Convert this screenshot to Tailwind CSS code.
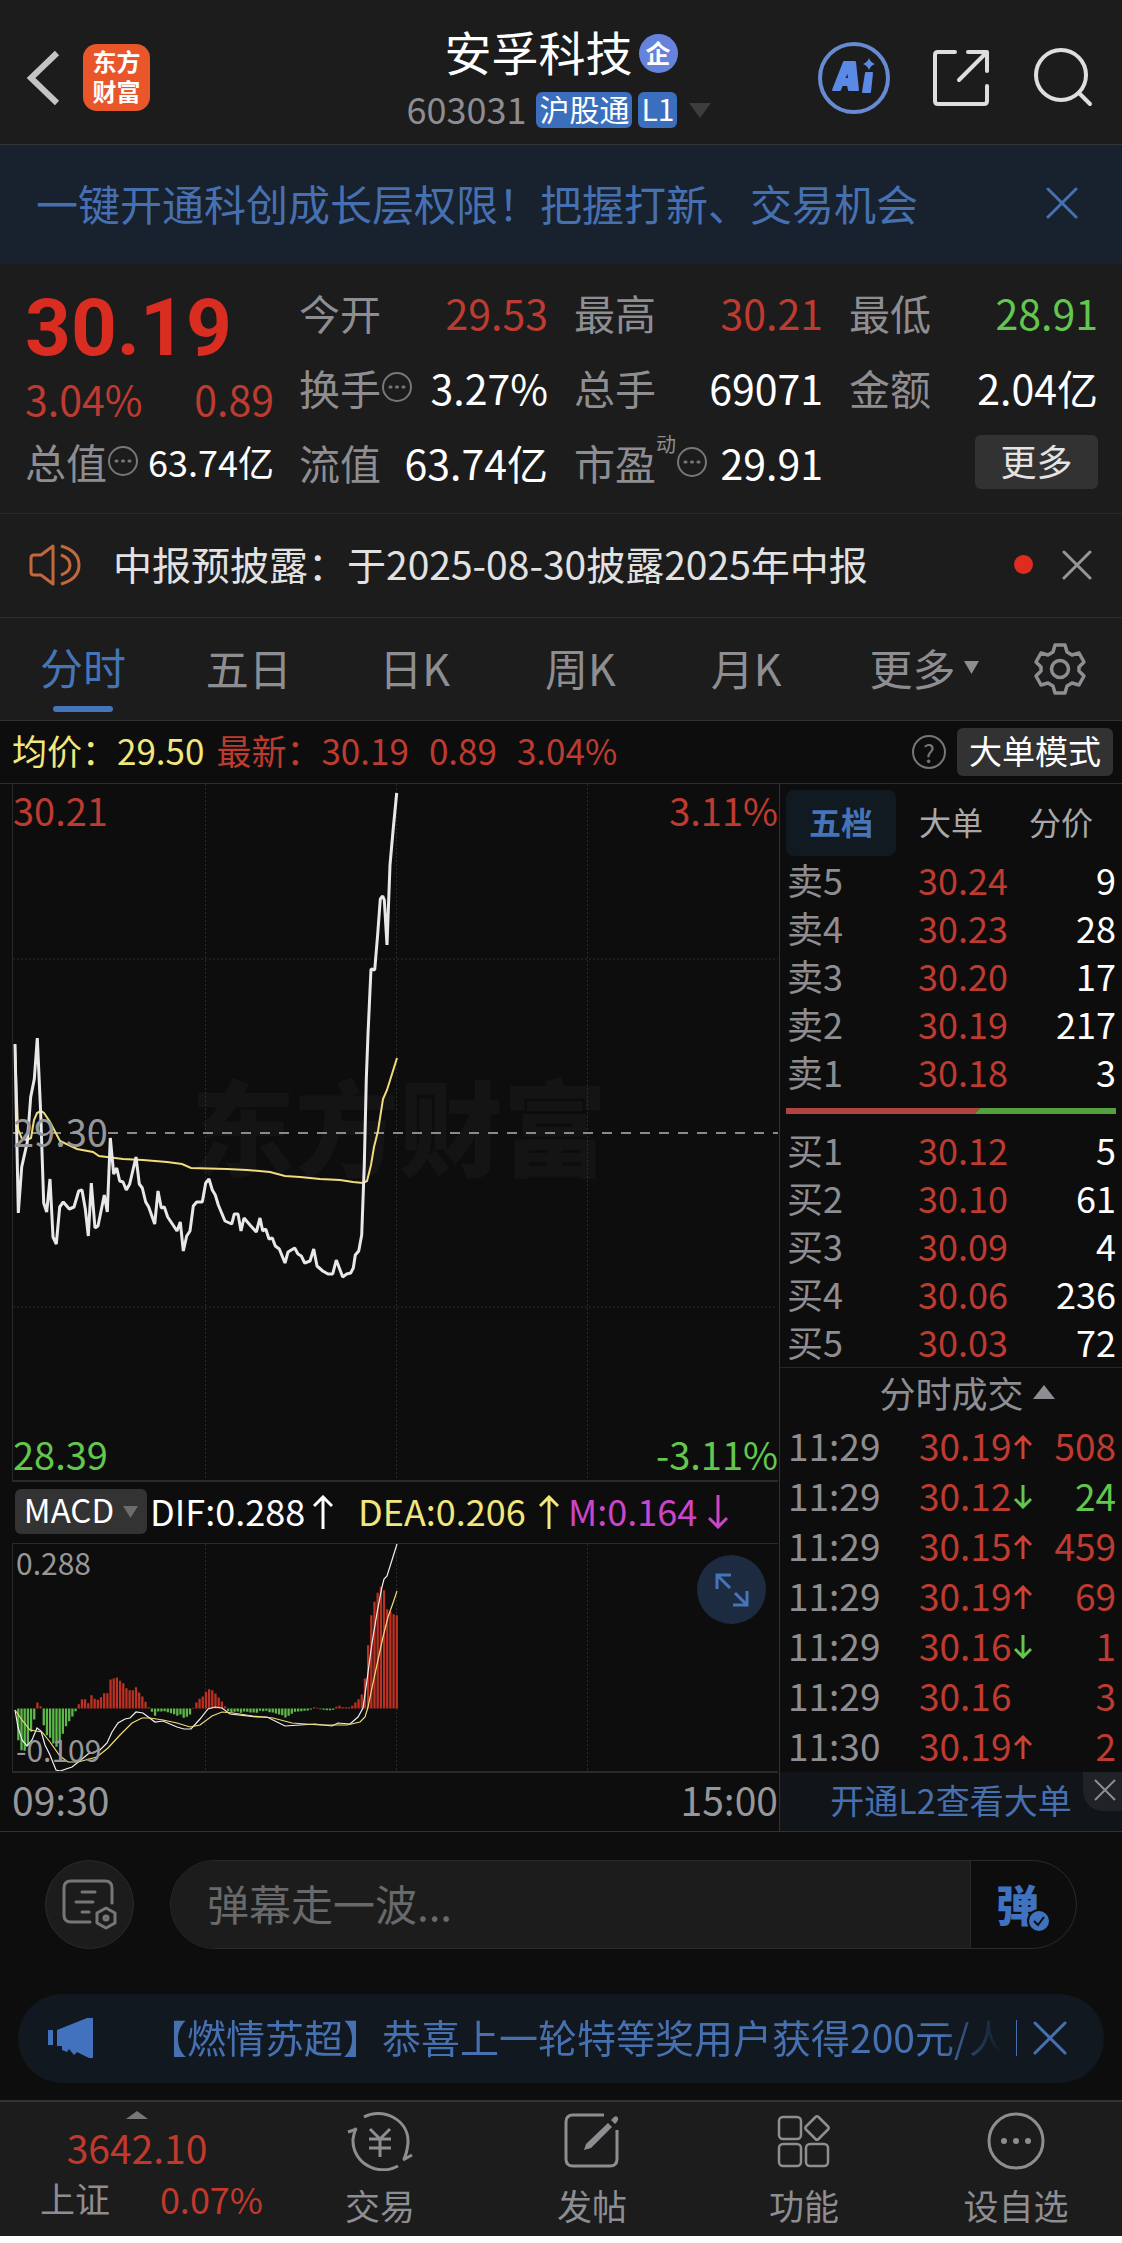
<!DOCTYPE html>
<html lang="zh-CN">
  <head>
    <meta charset="UTF-8" />
    <meta name="viewport" content="width=device-width, initial-scale=1.0" />
    <title>安孚科技 603031</title>
    <script src="https://cdn.jsdelivr.net/npm/@tailwindcss/browser@4"></script>
  </head>
  <body class="bg-[#fcfcfc] font-['Noto_Sans_CJK_SC',sans-serif] text-[#8e8e92]">
    <!-- Header -->
    <header class="bg-[#1c1c1c] h-[145px] border-b border-[#323436] grid grid-cols-[1fr_auto_1fr] pb-[1px]">
      <div class="flex items-center gap-[23px] pl-[26px] pt-3">
        <button aria-label="返回" class="w-[34px] h-[56px]">
          <svg viewBox="0 0 34 56" class="w-full h-full" fill="none" stroke="#c4c4c4" stroke-width="6"><path d="M31 3 L5 28 L31 53" /></svg>
        </button>
        <a href="#home" class="w-[67px] h-[67px] rounded-[14px] bg-[#e8562a] text-white font-bold text-[24px] leading-[30px] text-center flex flex-col justify-center pb-1"><span>东方</span><span>财富</span></a>
      </div>
      <div class="flex flex-col items-center pt-[22px]">
        <div class="flex items-center gap-[6px] h-[62px]">
          <h1 class="text-white text-[47px] leading-[62px] pb-1">安孚科技</h1>
          <span class="w-[39px] h-[39px] rounded-full bg-[#6583dc] text-white font-bold text-[25px] leading-[36px] text-center">企</span>
        </div>
        <div class="flex items-center h-[52px] pr-1">
          <span class="text-[36px] leading-[52px] mr-[10px] pb-1">603031</span>
          <span class="bg-[#3b6fbe] text-white text-[30px] leading-[33px] h-[36px] rounded-[6px] px-[3px] mr-[6px]">沪股通</span>
          <span class="bg-[#3b6fbe] text-white text-[30px] leading-[33px] h-[36px] rounded-[6px] px-[3px]">L1</span>
          <svg viewBox="0 0 22 15" class="w-[22px] h-[15px] ml-[12px]" fill="#3c3c3c"><path d="M0 0 H22 L11 15 Z" /></svg>
        </div>
      </div>
      <div class="flex items-center justify-end gap-[42px] pr-[28px] pt-3">
        <button aria-label="AI" class="w-[72px] h-[72px]">
          <svg viewBox="0 0 72 72" class="w-full h-full" fill="#5b8ae6">
            <circle cx="36" cy="36" r="34" fill="none" stroke="#678bd2" stroke-width="4" />
            <path fill-rule="evenodd" stroke="#5b8ae6" stroke-width="2" stroke-linejoin="round" d="M26 20 H37 L40 48 H31 L30 43 H24 L22 48 H15 Z M30 28 L26 37 H31 Z" />
            <path stroke="#5b8ae6" stroke-width="2" stroke-linejoin="round" d="M48 31 H54 L52 50 H45 Z" />
            <path d="M51 16 Q52.500 20.500 57 22 Q52.500 23.500 51 28 Q49.500 23.500 45 22 Q49.500 20.500 51 16 Z" />
          </svg>
        </button>
        <button aria-label="分享" class="w-[58px] h-[58px]">
          <svg viewBox="0 0 58 58" class="w-full h-full" fill="none" stroke="#dedede" stroke-width="4" stroke-linecap="round" stroke-linejoin="round"><path d="M23 3 H6 Q3 3 3 6 V52 Q3 55 6 55 H52 Q55 55 55 52 V37 M36 3 H55 V22 M54 4 L27 31" /></svg>
        </button>
        <button aria-label="搜索" class="w-[62px] h-[62px]">
          <svg viewBox="0 0 62 62" class="w-full h-full" fill="none" stroke="#dedede" stroke-width="4" stroke-linecap="round"><circle cx="29" cy="28" r="25" /><path d="M47 46 L58 57" /></svg>
        </button>
      </div>
    </header>

    <!-- Promo banner -->
    <section class="bg-[#18212e] h-[119px] flex items-center justify-between pl-[36px] pr-[44px] pb-1 text-[#4670b0]">
      <a href="#promo" class="text-[42px] leading-[60px]">一键开通科创成长层权限！把握打新、交易机会</a>
      <button aria-label="关闭" class="w-[32px] h-[32px]">
        <svg viewBox="0 0 32 32" class="w-full h-full" fill="none" stroke="currentColor" stroke-width="3" stroke-linecap="round"><path d="M2 2 L30 30 M30 2 L2 30" /></svg>
      </button>
    </section>

    <!-- Quote -->
    <section class="bg-[#1c1c1c] h-[250px] border-b border-[#2a2a2a] pt-[12px] pl-[25px] pr-[24px] flex gap-[25px]">
      <div class="w-[249px]">
        <div class="h-[92px] text-[#d82d20] text-[80px] leading-[104px] font-[Roboto] font-bold">30.19</div>
        <div class="h-[60px] flex justify-between text-[#bd3b30] text-[41px] leading-[60px]"><span>3.04%</span><span>0.89</span></div>
        <div class="h-[66px] flex items-center text-[41px] leading-[66px]">
          <span>总值</span>
          <svg viewBox="0 0 32 32" class="w-[32px] h-[32px]" fill="none" stroke="#77777a" stroke-width="2"><circle cx="16" cy="16" r="14" /><path d="M9 16h1 M15.500 16h1 M22 16h1" stroke-width="3" stroke-linecap="round" /></svg>
          <span class="ml-auto text-white text-[36px]">63.74亿</span>
        </div>
      </div>
      <dl class="flex-1 grid grid-cols-3 auto-rows-[75px] gap-x-[26px] h-[225px] pt-[3px] text-[41px] leading-[66px]">
        <div class="flex justify-between"><dt>今开</dt><dd class="text-[#bd3b30]">29.53</dd></div>
        <div class="flex justify-between"><dt>最高</dt><dd class="text-[#bd3b30]">30.21</dd></div>
        <div class="flex justify-between"><dt>最低</dt><dd class="text-[#63c74d]">28.91</dd></div>
        <div class="flex justify-between">
          <dt class="flex items-center h-[66px]">换手
            <svg viewBox="0 0 32 32" class="w-[32px] h-[32px]" fill="none" stroke="#77777a" stroke-width="2"><circle cx="16" cy="16" r="14" /><path d="M9 16h1 M15.500 16h1 M22 16h1" stroke-width="3" stroke-linecap="round" /></svg>
          </dt>
          <dd class="text-white">3.27%</dd>
        </div>
        <div class="flex justify-between"><dt>总手</dt><dd class="text-white">69071</dd></div>
        <div class="flex justify-between"><dt>金额</dt><dd class="text-white">2.04亿</dd></div>
        <div class="flex justify-between"><dt>流值</dt><dd class="text-white">63.74亿</dd></div>
        <div class="flex justify-between">
          <dt class="flex items-center h-[66px]">市盈<span class="text-[20px] leading-[30px] self-start">动</span>
            <svg viewBox="0 0 32 32" class="w-[32px] h-[32px]" fill="none" stroke="#77777a" stroke-width="2"><circle cx="16" cy="16" r="14" /><path d="M9 16h1 M15.500 16h1 M22 16h1" stroke-width="3" stroke-linecap="round" /></svg>
          </dt>
          <dd class="text-white">29.91</dd>
        </div>
        <div class="flex justify-end pt-[6px]"><button class="w-[123px] h-[54px] rounded-[6px] bg-[#323232] text-[#e4e4e4] text-[36px] leading-[50px] pb-1">更多</button></div>
      </dl>
    </section>

    <!-- Announcement -->
    <section class="bg-[#1c1c1c] h-[104px] border-b border-[#303030] flex items-center pl-[29px] pr-[30px] pb-[2px]">
      <svg viewBox="0 0 54 44" class="w-[54px] h-[44px] mr-[30px]" fill="none" stroke="#c4673a" stroke-width="3" stroke-linejoin="round"><path d="M24 3 L12 12 H5 Q2 12 2 15 V29 Q2 32 5 32 H12 L24 41 Z M32 3 Q50 8 50 22 Q50 36 32 41 M32 12 Q41 15 41 22 Q41 29 32 32" /></svg>
      <a href="#report" class="flex-1 text-[#e2e2e2] text-[39px] leading-[56px] pb-1">中报预披露：于2025-08-30披露2025年中报</a>
      <span class="w-[19px] h-[19px] rounded-full bg-[#dc2d20] mr-[29px]"></span>
      <button aria-label="关闭" class="w-[30px] h-[30px]">
        <svg viewBox="0 0 30 30" class="w-full h-full" fill="none" stroke="#969696" stroke-width="3" stroke-linecap="round"><path d="M2 2 L28 28 M28 2 L2 28" /></svg>
      </button>
    </section>

    <!-- Chart tabs -->
    <nav class="bg-[#1c1c1c] h-[103px] border-b border-[#303030] flex items-center pr-[35px] text-[43px] leading-[60px]">
      <button class="flex-1 h-full text-[#4574b8] flex flex-col items-center pt-[18px] gap-[10px]">分时<span class="w-[60px] h-[6px] rounded-full bg-[#4574b8]"></span></button>
      <button class="flex-1 pb-1">五日</button>
      <button class="flex-1 pb-1">日K</button>
      <button class="flex-1 pb-1">周K</button>
      <button class="flex-1 pb-1">月K</button>
      <button class="flex-1 pb-1 flex items-center justify-center gap-[8px] pl-3">更多<svg viewBox="0 0 15 13" class="w-[15px] h-[13px]" fill="currentColor"><path d="M0 0 H15 L7.500 13 Z" /></svg></button>
      <button aria-label="设置" class="w-[54px] h-[54px] ml-[26px]">
        <svg viewBox="0 0 54 54" class="w-full h-full" fill="none" stroke="currentColor" stroke-width="3.500" stroke-linejoin="round">
          <path d="M22 3 H32 L34 10 L39 13 L46 11 L51 20 L46 25 V29 L51 34 L46 43 L39 41 L34 44 L32 51 H22 L20 44 L15 41 L8 43 L3 34 L8 29 V25 L3 20 L8 11 L15 13 L20 10 Z" />
          <circle cx="27" cy="27" r="8.500" />
        </svg>
      </button>
    </nav>

    <main class="bg-[#0d0d0d]">
      <!-- Average / latest price -->
      <section class="h-[63px] border-b border-[#2e2e2e] flex items-center pl-[12px] pr-[9px] text-[35px] leading-[50px]">
        <p class="text-[#f2e77c] pb-1">均价：29.50</p>
        <p class="text-[#bd3b30] pl-[12px] pb-1 flex gap-[20px]"><span>最新：30.19</span><span>0.89</span><span>3.04%</span></p>
        <button aria-label="说明" class="ml-auto w-[34px] h-[34px] border-2 border-[#77777a] rounded-full text-[#77777a] text-[25px] leading-[28px]">?</button>
        <button class="ml-[11px] w-[156px] h-[48px] rounded-[6px] bg-[#323232] text-white text-[33px] leading-[44px] pb-1">大单模式</button>
      </section>

      <section class="flex border-b border-[#323234]">
        <!-- Charts -->
        <div class="flex-1 pl-[12px] pr-[1px]">
          <div class="relative border-l border-b-2 border-[#2a2a2a] text-[38px] leading-[40px]">
            <svg viewBox="1 0 765 696" class="block w-full" fill="none">
              <text x="387" y="385" text-anchor="middle" font-size="104" font-weight="900" fill="#141414">东方财富</text>
              <path d="M193.500 0 V696 M384.500 0 V696 M575.500 0 V696 M1 175 H766 M1 523 H766" stroke="#2b2b2b" stroke-dasharray="2 2" />
              <path d="M1 349 H766" stroke="#8a8a8a" stroke-width="2" stroke-dasharray="10 9" />
              <polyline stroke="#f0dc7c" stroke-width="2" points="3,260 6,345 10,355 15,356 19,354 22,336 25,329 29,327 32,329 38,338 48,357 65,365 81,368 87,372 111,375 131,376 155,378 170,380 179,384 215,385 235,386 258,388 273,392 288,393 308,395 328,396 341,398 351,399 355,397 359,381 362,363 366,347 371,315 375,306 380,290 385,274" />
              <polyline stroke="#e8e8e8" stroke-width="3" stroke-linejoin="bevel" points="3,260 4.700,349 6.300,429 9.700,383 15.300,358 18.700,313 22.300,295 25.300,254 28.700,329 31.700,419 34.700,428 38,395 41,453 44.300,460 47.700,423 51.300,418 57.300,425 62,423 66.700,407 70,406 73.300,425 76.300,452 79.300,399 83,444 86,442 92.300,411 95.300,428 98.300,354 101.700,390 104.700,384 107.700,397 111,398 114.300,406 117.700,400 124,373 127.300,400 130.300,404 133.700,418 136.700,423 142.700,440 146,407 149.300,424 152.300,423 155.700,433 165,447 168.300,438 171.300,467 174.700,452 178,447 181.300,422 184.700,418 190.300,418 193.700,399 197,395 200.300,406 203.300,411 206.300,421 213,437 219.700,440 222.300,430 226,430 229,447 232,434 238,441 244.300,448 248,434 250.700,447 253.700,445 257,455 260.300,454 263.300,462 267.300,465 273,479 276,468 282.700,464 286,470 289.300,472 292.700,479 298,477 301.700,465 305,482 310.700,487 316,490 320.700,490 324.300,476 330.700,493 334.700,490 338.700,489 341.300,484 343.300,471 346.700,467 349.700,451 352.300,381 354.300,295 356,250 359,185 362.700,186 365.700,150 368.300,115 370.700,112 372.300,116 375,161 378,81 381.300,44 384.700,9" />
            </svg>
            <span class="absolute left-0 top-[6px] text-[#bd3b30]">30.21</span>
            <span class="absolute right-0 top-[6px] text-[#bd3b30]">3.11%</span>
            <span class="absolute left-0 top-[327px] text-[#97979a]">29.30</span>
            <span class="absolute left-0 bottom-[6px] text-[#63c74d]">28.39</span>
            <span class="absolute right-0 bottom-[6px] text-[#63c74d]">-3.11%</span>
          </div>

          <div class="h-[61px] flex items-center pl-[3px] pb-[2px] text-[36px] leading-[50px]">
            <button class="w-[132px] h-[45px] rounded-[6px] bg-[#333333] text-white text-[33px] leading-[41px] pb-1 flex items-center justify-center gap-[9px]">MACD<svg viewBox="0 0 15 12" class="w-[15px] h-[12px] mt-1" fill="#6c6c6c"><path d="M0 0 H15 L7.500 12 Z" /></svg></button>
            <p class="flex items-center text-white ml-[2px] w-[209px]"><span class="pb-1 pl-[1px]">DIF:0.288</span><svg viewBox="0 0 20 34" class="w-[20px] h-[34px] ml-[8px]" fill="none" stroke="currentColor" stroke-width="3"><path d="M10 34 V2 M1 11 L10 2 L19 11" /></svg></p>
            <p class="flex items-center text-[#f2e77c] w-[210px]"><span class="pb-1">DEA:0.206</span><svg viewBox="0 0 20 34" class="w-[20px] h-[34px] ml-[13px]" fill="none" stroke="currentColor" stroke-width="3"><path d="M10 34 V2 M1 11 L10 2 L19 11" /></svg></p>
            <p class="flex items-center text-[#cb45cb]"><span class="pb-1">M:0.164</span><svg viewBox="0 0 20 34" class="w-[20px] h-[34px] ml-[11px]" fill="none" stroke="currentColor" stroke-width="3"><path d="M10 0 V32 M1 23 L10 32 L19 23" /></svg></p>
          </div>

          <div class="relative border-l border-t border-b-2 border-[#2a2a2a] text-[30px] leading-[32px] text-[#97979a]">
            <svg viewBox="1 0 765 227" class="block w-full" fill="none">
              <path d="M193.500 0 V227 M384.500 0 V227 M575.500 0 V227" stroke="#2b2b2b" stroke-dasharray="2 2" />
              <path id="barsUp" fill="#bb3123" />
              <path id="barsDown" fill="#5cb848" />
              <polyline stroke="#f0f0f0" stroke-width="1.200" points="3,166 6,183 10,196 15,202 20,196 25,184 29,187 33,201 38,211 44,226 48,227 60,223 70,215 76,210 88,206 95,199 100,188 106,179 113,175 118,174 124,168 131,169 143,178 151,177 165,183 172,185 179,185 188,175 196,165 203,163 210,164 218,170 245,173 255,173 273,182 288,181 303,180 320,182 326,179 338,180 346,173 351,164 355,136 360,99 365,69 370,43 372,35 375,32 380,16 385,0" />
              <polyline stroke="#f0dc7c" stroke-width="1.200" points="3,166 10,176 18,186 30,188 38,198 48,212 56,218 66,218 85,213 96,204 108,191 120,179 130,174 138,174 151,176 165,179 178,183 188,181 200,172 210,168 221,169 241,172 261,174 280,179 308,181 335,181 348,178 353,173 356,163 361,139 366,116 371,93 376,73 381,59 385,47" />
            </svg>
            <span class="absolute left-[3px] top-[2px]">0.288</span>
            <span class="absolute left-[3px] bottom-[6px]">-0.109</span>
            <button aria-label="全屏" class="absolute right-[12px] top-[11px] w-[69px] h-[69px] rounded-full bg-[#1d2b41] flex items-center justify-center">
              <svg viewBox="0 0 34 34" class="w-[34px] h-[34px]" fill="none" stroke="#4574b8" stroke-width="3"><path d="M16 2 H2 V16 M2 2 L15 15 M18 32 H32 V18 M32 32 L20 20" /></svg>
            </button>
          </div>
          <div class="h-[58px] flex justify-between text-[39px] leading-[52px] text-[#97979a]"><span>09:30</span><span>15:00</span></div>
        </div>

        <!-- Order book and trades -->
        <aside class="w-[343px] border-l border-[#323234] flex flex-col pt-[6px]">
          <div class="h-[66px] mx-[6px] grid grid-cols-3 text-[32px] leading-[46px] text-[#a8a8aa]">
            <button class="rounded-[8px] bg-[#111921] text-[#4574b8] font-bold pb-1">五档</button>
            <button class="pb-1">大单</button>
            <button class="pb-1">分价</button>
          </div>
          <table class="w-full mt-[1px] text-[36px] leading-[44px]">
            <tbody>
              <tr class="h-12"><td class="pl-[7px] pb-1 w-[138px]">卖5</td><td class="pb-1 text-[#bd3b30]">30.24</td><td class="pb-1 pr-[6px] text-right text-white">9</td></tr>
              <tr class="h-12"><td class="pl-[7px] pb-1">卖4</td><td class="pb-1 text-[#bd3b30]">30.23</td><td class="pb-1 pr-[6px] text-right text-white">28</td></tr>
              <tr class="h-12"><td class="pl-[7px] pb-1">卖3</td><td class="pb-1 text-[#bd3b30]">30.20</td><td class="pb-1 pr-[6px] text-right text-white">17</td></tr>
              <tr class="h-12"><td class="pl-[7px] pb-1">卖2</td><td class="pb-1 text-[#bd3b30]">30.19</td><td class="pb-1 pr-[6px] text-right text-white">217</td></tr>
              <tr class="h-12"><td class="pl-[7px] pb-1">卖1</td><td class="pb-1 text-[#bd3b30]">30.18</td><td class="pb-1 pr-[6px] text-right text-white">3</td></tr>
            </tbody>
          </table>
          <svg viewBox="0 0 330 6" class="mx-[6px] mt-[11px] mb-[13px] h-[6px]" preserveAspectRatio="none"><path d="M0 0 H194 L188 6 H0 Z" fill="#b04440" /><path d="M194 0 H330 V6 H188 Z" fill="#549f3e" /></svg>
          <table class="w-full text-[36px] leading-[44px]">
            <tbody>
              <tr class="h-12"><td class="pl-[7px] pb-1 w-[138px]">买1</td><td class="pb-1 text-[#bd3b30]">30.12</td><td class="pb-1 pr-[6px] text-right text-white">5</td></tr>
              <tr class="h-12"><td class="pl-[7px] pb-1">买2</td><td class="pb-1 text-[#bd3b30]">30.10</td><td class="pb-1 pr-[6px] text-right text-white">61</td></tr>
              <tr class="h-12"><td class="pl-[7px] pb-1">买3</td><td class="pb-1 text-[#bd3b30]">30.09</td><td class="pb-1 pr-[6px] text-right text-white">4</td></tr>
              <tr class="h-12"><td class="pl-[7px] pb-1">买4</td><td class="pb-1 text-[#bd3b30]">30.06</td><td class="pb-1 pr-[6px] text-right text-white">236</td></tr>
              <tr class="h-12"><td class="pl-[7px] pb-1">买5</td><td class="pb-1 text-[#bd3b30]">30.03</td><td class="pb-1 pr-[6px] text-right text-white">72</td></tr>
            </tbody>
          </table>
          <button class="h-[55px] border-t border-[#262626] flex items-center justify-center gap-[9px] pb-[6px] pl-[32px] text-[36px] leading-[46px]">分时成交<svg viewBox="0 0 22 14" class="w-[22px] h-[14px]" fill="currentColor"><path d="M11 0 L22 14 H0 Z" /></svg></button>
          <table class="w-full text-[37px] leading-[46px]">
            <tbody id="trades"></tbody>
          </table>
          <div class="relative flex-1 bg-[#111419] text-center">
            <a href="#l2" class="block text-[34px] leading-[56px] text-[#4670b0]">开通L2查看大单</a>
            <button aria-label="关闭" class="absolute right-0 top-0 w-[39px] h-[39px] bg-[#1f2227] rounded-bl-[20px] flex items-center justify-center pl-1 pb-1">
              <svg viewBox="0 0 22 22" class="w-[22px] h-[22px]" fill="none" stroke="#8e8e92" stroke-width="2"><path d="M1 1 L21 21 M21 1 L1 21" /></svg>
            </button>
          </div>
        </aside>
      </section>

      <!-- Comment bar -->
      <section class="flex items-center pt-[28px] pl-[45px] pr-[45px] gap-[36px]">
        <button aria-label="弹幕列表" class="w-[89px] h-[89px] shrink-0 rounded-full bg-[#1c1c1c] border border-[#2a2a2a] flex items-center justify-center">
          <svg viewBox="0 0 56 52" class="w-[56px] h-[52px]" fill="none" stroke="#77777a" stroke-width="3" stroke-linecap="round">
            <path d="M28 43 H9 Q2 43 2 36 V9 Q2 2 9 2 H43 Q50 2 50 9 V24 M20 13 H33 M14 23 H31 M20 33 H27" />
            <path d="M44 29 L53 34 V44 L44 49 L35 44 V34 Z" stroke-linejoin="round" /><circle cx="44" cy="39" r="2" />
          </svg>
        </button>
        <form class="flex-1 h-[89px] rounded-full border border-[#2a2a2a] flex overflow-hidden">
          <input type="text" aria-label="弹幕" placeholder="弹幕走一波..." class="flex-1 min-w-0 bg-[#1c1c1c] border-r border-[#2a2a2a] pl-[36px] pb-1 text-[42px] placeholder:text-[#69696b] outline-none" />
          <button type="button" class="relative w-[105px] pr-[12px] pb-1 text-[#3f72bf] font-black text-[43px] leading-[78px]">弹
            <svg viewBox="0 0 24 24" class="absolute left-[56px] top-[48px] w-[24px] h-[24px]"><circle cx="12" cy="12" r="11" fill="#3f72bf" stroke="#0d0d0d" stroke-width="2" /><path d="M7 12 L11 16 L17 8" fill="none" stroke="#0d0d0d" stroke-width="2" /></svg>
          </button>
        </form>
      </section>

      <!-- Marquee -->
      <section class="pt-[45px] pb-[17px] px-[18px]">
        <div class="h-[89px] rounded-full bg-[#111820] flex items-center pl-[29px] pr-[37px] pb-[2px] text-[#4670b0]">
          <svg viewBox="0 0 48 40" class="w-[48px] h-[40px] shrink-0" fill="#4272bd"><path d="M1 12 H6 V27 H1 Z M10 12 L40 0 H46 V40 H42 L30 34 L27 37 L22 31 L20 34 L15 32 V28 H10 Z" /></svg>
          <a href="#activity" class="ml-[53px] flex-1 min-w-0 overflow-hidden whitespace-nowrap text-[39px] leading-[56px] pb-1 mask-r-from-93% mask-r-to-100%">【燃情苏超】恭喜上一轮特等奖用户获得200元/人</a>
          <span class="ml-[14px] w-[1px] h-[36px] bg-[#4670b0]"></span>
          <button aria-label="关闭" class="ml-[16px] w-[34px] h-[34px] shrink-0">
            <svg viewBox="0 0 34 34" class="w-full h-full" fill="none" stroke="currentColor" stroke-width="3" stroke-linecap="round"><path d="M2 2 L32 32 M32 2 L2 32" /></svg>
          </button>
        </div>
      </section>
    </main>

    <!-- Bottom bar -->
    <footer class="bg-[#1c1c1c] h-[136px] border-t-2 border-[#333333] flex text-[35px] leading-[48px]">
      <a href="#index" class="w-[274px] flex flex-col items-center pt-[9px]">
        <svg viewBox="0 0 22 8" class="w-[22px] h-[8px]" fill="#77777a"><path d="M11 0 L22 8 H0 Z" /></svg>
        <span class="text-[#c0392c] text-[39px] leading-[56px]">3642.10</span>
        <span class="w-full flex justify-between pl-[40px] pr-[11px] leading-[46px]"><span>上证</span><span class="text-[#c0392c] text-[36px]">0.07%</span></span>
      </a>
      <a href="#trade" class="flex-1 flex flex-col items-center pt-[9px] gap-[10px]">
        <svg viewBox="0 0 66 60" class="w-[66px] h-[60px]" fill="none" stroke="currentColor" stroke-width="3"><path d="M17 6 C35 -4 62 8 61 32 Q60 42 57 48 M56 49 L65 44 M51 55 C31 66 5 52 6 28 Q7 22 9 17 M10 18 L1 21 M23 18 L33 28 L43 18 M33 28 V46 M22 28 H44 M22 37 H44" /></svg>
        <span>交易</span>
      </a>
      <a href="#post" class="flex-1 flex flex-col items-center pt-[9px] gap-[10px]">
        <svg viewBox="0 0 56 60" class="w-[56px] h-[60px]" fill="none" stroke="currentColor" stroke-width="3"><path d="M40 4 H9 Q2 4 2 11 V48 Q2 55 9 55 H46 Q53 55 53 48 V19" /><path d="M44 12 L48 16 L27 37 L20 39 L22 33 Z M47 9 L50 6 Q53 4 54 7 Q55 9 51 13 Z" fill="currentColor" stroke="none" /></svg>
        <span>发帖</span>
      </a>
      <a href="#tools" class="flex-1 flex flex-col items-center pt-[9px] gap-[10px]">
        <svg viewBox="0 0 56 60" class="w-[56px] h-[60px]" fill="none" stroke="currentColor" stroke-width="2.500" stroke-linejoin="round"><rect x="3" y="6" width="22" height="22" rx="4" /><rect x="3" y="33" width="22" height="22" rx="4" /><rect x="30" y="33" width="22" height="22" rx="4" /><path d="M39.500 6 Q41 4.500 42.500 6 L52 15.500 Q53.500 17 52 18.500 L42.500 28 Q41 29.500 39.500 28 L30 18.500 Q28.500 17 30 15.500 Z" /></svg>
        <span>功能</span>
      </a>
      <a href="#watch" class="flex-1 flex flex-col items-center pt-[9px] gap-[10px]">
        <svg viewBox="0 0 60 60" class="w-[60px] h-[60px]" fill="currentColor"><circle cx="30" cy="30" r="27" fill="none" stroke="currentColor" stroke-width="3" /><circle cx="18" cy="30" r="3" /><circle cx="30" cy="30" r="3" /><circle cx="42" cy="30" r="3" /></svg>
        <span>设自选</span>
      </a>
    </footer>

    <script>
      // MACD histogram, one value per minute
      const macd = [0, -95, -125, -127, -110, -70, -33, 18, 7, -50, -80, -88, -105, -115, -100, -76, -53, -38, -24, -8,
        13, 28, 28, 16, 40, 29, 26, 34, 46, 46, 87, 90, 93, 83, 76, 61, 55, 55, 64, 48, 36, 20, 4, -10, -22, -9, -9, -8,
        -11, -14, -17, -22, -18, -28, -25, -18, 2, 18, 29, 36, 50, 58, 55, 45, 33, 21, 7, -8, -12, -10, -9, -13, -9, -10,
        -12, -12, -13, -7, -8, -7, -11, -12, -15, -18, -20, -27, -22, -16, -10, -9, -8, -7, -6, -3, 4, 2, -2, -4, -5, -5,
        -4, 5, 8, 4, 4, 4, 8, 18, 28, 42, 90, 190, 280, 320, 347, 365, 355, 298, 290, 283, 280];
      let up = '', down = '';
      macd.forEach((v, i) => {
        const bar = `M${2 + i * 3.18} 164.5 v${-v / 3} h2.3 v${v / 3} Z `;
        if (v > 0) up += bar; else down += bar;
      });
      document.getElementById('barsUp').setAttribute('d', up);
      document.getElementById('barsDown').setAttribute('d', down);

      const trades = [
        ['11:29', '30.19', 'up', 508],
        ['11:29', '30.12', 'down', 24],
        ['11:29', '30.15', 'up', 459],
        ['11:29', '30.19', 'up', 69],
        ['11:29', '30.16', 'down', 1],
        ['11:29', '30.16', '', 3],
        ['11:30', '30.19', 'up', 2],
      ];
      const arrows = {
        up: '<svg viewBox="0 0 18 24" class="w-[18px] h-[24px] text-[#cf4334]" fill="none" stroke="currentColor" stroke-width="3"><path d="M9 24 V2 M1 10 L9 2 L17 10" /></svg>',
        down: '<svg viewBox="0 0 18 24" class="w-[18px] h-[24px] text-[#63c74d]" fill="none" stroke="currentColor" stroke-width="3"><path d="M9 0 V22 M1 14 L9 22 L17 14" /></svg>',
        '': '',
      };
      document.getElementById('trades').innerHTML = trades.map(([time, price, dir, vol]) => `
        <tr class="h-[50px]">
          <td class="pl-[8px] pb-1 w-[139px]">${time}</td>
          <td class="text-[#bd3b30]"><span class="flex items-center gap-[3px]"><span class="pb-1">${price}</span>${arrows[dir]}</span></td>
          <td class="pb-1 pr-[6px] text-right ${dir === 'down' && vol > 1 ? 'text-[#63c74d]' : 'text-[#bd3b30]'}">${vol}</td>
        </tr>`).join('');
    </script>
  </body>
</html>
